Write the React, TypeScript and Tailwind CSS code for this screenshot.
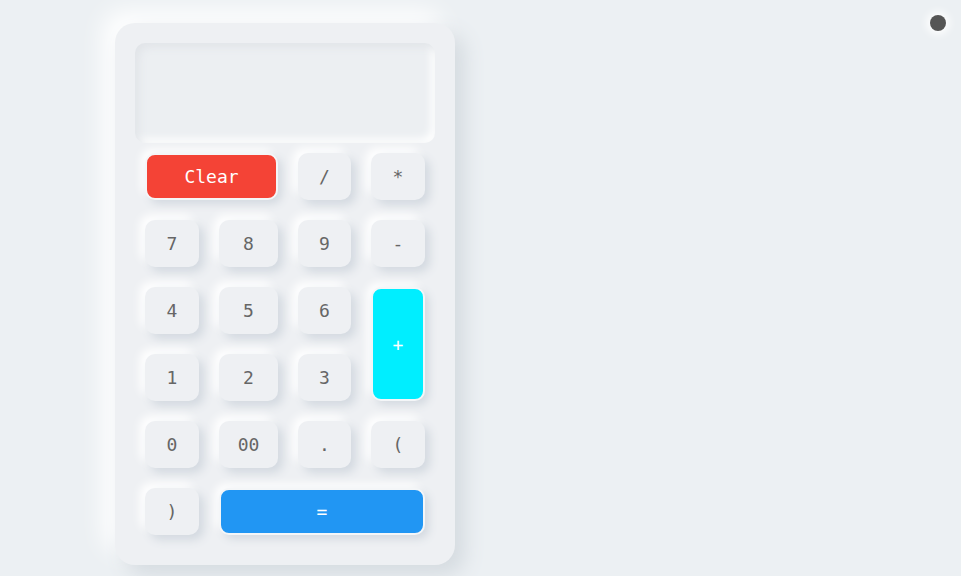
import React from "react";

const keyBase =
  "flex items-center justify-center rounded-[10px] text-[18px] text-[#666] bg-[#eef0f3] shadow-[5px_5px_10px_#d3d9e0,-5px_-5px_10px_#ffffff]";

const coloured =
  "flex items-center justify-center rounded-[10px] text-[18px] text-white border-2 border-[#f4f6f8] shadow-[4px_4px_8px_#d3d9e0,-4px_-4px_8px_#ffffff]";

export default function App() {
  return (
    <div
      className="relative min-h-[576px] w-full bg-[#ecf0f3] pl-[115px] pt-[23px]"
      style={{ fontFamily: '"DejaVu Sans Mono", "Liberation Mono", monospace' }}
    >
      <div className="absolute right-[15px] top-[15px] h-[16px] w-[16px] rounded-full bg-[#555555] shadow-[0_0_8px_3px_#ffffff]" />

      <div className="flex w-[340px] flex-col rounded-[20px] bg-[#eef0f3] p-5 shadow-[10px_10px_20px_#d5dbe0,-12px_-12px_24px_#ffffff]">
        <div className="h-[100px] w-full rounded-[10px] bg-[#eceff2] shadow-[inset_4px_4px_8px_#e1e4e8,inset_-4px_-4px_8px_#ffffff]" />

        <div className="mt-[10px] grid grid-cols-[54px_59px_53px_54px] grid-rows-[47px_47px_47px_47px_47px_47px] gap-5 px-[10px] pb-[10px]">
          <button className={`${coloured} col-span-2 bg-[#f44336]`}>Clear</button>
          <button className={keyBase}>/</button>
          <button className={keyBase}>*</button>

          <button className={keyBase}>7</button>
          <button className={keyBase}>8</button>
          <button className={keyBase}>9</button>
          <button className={keyBase}>-</button>

          <button className={keyBase}>4</button>
          <button className={keyBase}>5</button>
          <button className={keyBase}>6</button>
          <button className={`${coloured} row-span-2 bg-[#00eeff]`}>+</button>

          <button className={keyBase}>1</button>
          <button className={keyBase}>2</button>
          <button className={keyBase}>3</button>

          <button className={keyBase}>0</button>
          <button className={keyBase}>00</button>
          <button className={keyBase}>.</button>
          <button className={keyBase}>(</button>

          <button className={keyBase}>)</button>
          <button className={`${coloured} col-span-3 bg-[#2196f3]`}>=</button>
        </div>
      </div>
    </div>
  );
}
